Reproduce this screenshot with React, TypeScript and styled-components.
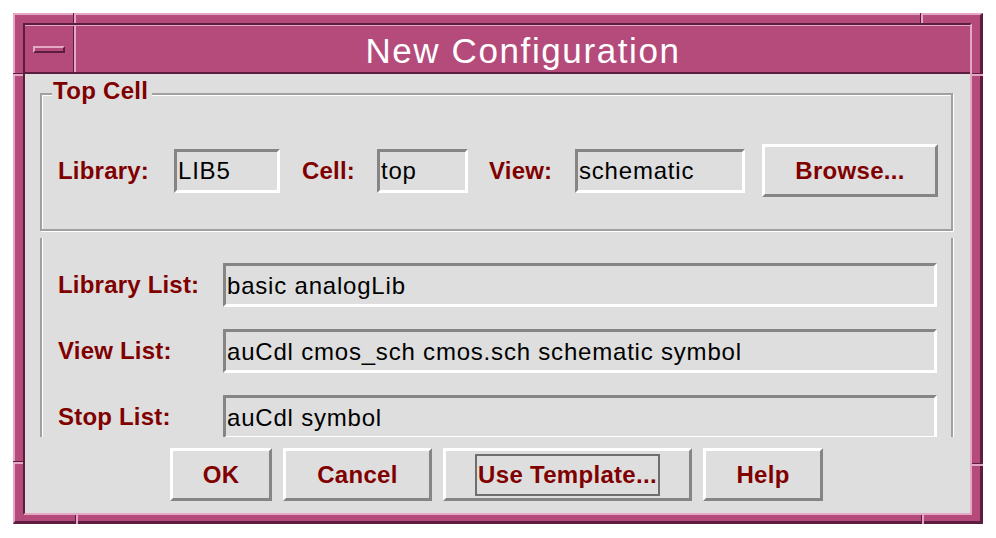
import React from "react";
import styled, { createGlobalStyle } from "styled-components";

const C = {
  pink: "#b44b7b",
  pinkLight: "#e4a8c5",
  pinkDark: "#5d1d40",
  body: "#dedede",
  grey: "#858585",
  etch: "#a0a0a0",
  red: "#800000",
};

const Global = createGlobalStyle`
  html, body { margin: 0; padding: 0; background: #ffffff; }
  body { font-family: "Liberation Sans", Arial, sans-serif; }
`;

const Page = styled.div`
  width: 996px;
  height: 538px;
  box-sizing: border-box;
  padding: 13px;
`;

const Window = styled.div`
  position: relative;
  width: 970px;
  height: 511px;
  box-sizing: border-box;
  background: ${C.pink};
  border-style: solid;
  border-width: 2px 3px 3px 2px;
  border-color: ${C.pinkLight} ${C.pinkDark} ${C.pinkDark} ${C.pinkLight};
  padding: 8px 8px 6px 8px;
  display: flex;
`;

const Notch = styled.span<{ $x: number; $y: number; $len: number; $vertical?: boolean }>`
  position: absolute;
  left: ${(p) => p.$x}px;
  top: ${(p) => p.$y}px;
  box-sizing: border-box;
  background: ${C.pinkLight};
  ${(p) =>
    p.$vertical
      ? `width: 3px; height: ${p.$len}px; border-left: 1px solid ${C.pinkDark};`
      : `height: 3px; width: ${p.$len}px; border-top: 1px solid ${C.pinkDark};`}
`;

const Client = styled.div`
  flex: 1;
  display: flex;
  flex-direction: column;
  border-style: solid;
  border-width: 2px;
  border-color: ${C.pinkDark} ${C.pinkLight} ${C.pinkLight} ${C.pinkDark};
`;

const TitleBar = styled.div`
  height: 49px;
  box-sizing: border-box;
  display: flex;
  background: ${C.pink};
  border-top: 1px solid ${C.pinkLight};
  border-bottom: 2px solid ${C.pinkDark};
`;

const MenuButton = styled.div`
  width: 49px;
  box-sizing: border-box;
  border-right: 1px solid ${C.pinkDark};
  display: flex;
  align-items: center;
  justify-content: center;
`;

const MenuGlyph = styled.span`
  display: block;
  width: 32px;
  height: 7px;
  box-sizing: border-box;
  background: ${C.pink};
  border-style: solid;
  border-width: 2px;
  border-color: ${C.pinkLight} ${C.pinkDark} ${C.pinkDark} ${C.pinkLight};
  margin-top: 1px;
`;

const Title = styled.div`
  flex: 1;
  border-left: 2px solid ${C.pinkLight};
  display: flex;
  align-items: center;
  justify-content: center;
  padding-top: 4px;
  color: #ffffff;
  font-size: 35px;
  letter-spacing: 1.6px;
`;

const Body = styled.div`
  flex: 1;
  background: ${C.body};
  padding: 19px 17px 12px 15px;
  display: flex;
  flex-direction: column;
`;

const Group = styled.div`
  position: relative;
  height: 138px;
  box-sizing: border-box;
  border: 2px solid ${C.etch};
  box-shadow: inset 1px 1px 0 #ffffff, 1px 1px 0 #ffffff;
  padding: 49px 0 0 16px;
`;

const Legend = styled.span`
  position: absolute;
  top: -16px;
  left: 10px;
  padding: 0 4px 0 1px;
  background: ${C.body};
  color: ${C.red};
  font-weight: bold;
  font-size: 24px;
  line-height: 24px;
  letter-spacing: 0.3px;
`;

const TopRow = styled.div`
  display: flex;
  align-items: center;
  height: 53px;
`;

const Label = styled.span<{ $w: number; $ml?: number }>`
  flex: none;
  width: ${(p) => p.$w}px;
  margin-left: ${(p) => p.$ml ?? 0}px;
  color: ${C.red};
  font-weight: bold;
  font-size: 24px;
  letter-spacing: 0.2px;
  white-space: nowrap;
`;

const Field = styled.div<{ $w?: number }>`
  ${(p) => (p.$w ? `width: ${p.$w}px; flex: none;` : `flex: 1;`)}
  height: 44px;
  box-sizing: border-box;
  border-style: solid;
  border-width: 3px;
  border-color: ${C.grey} #ffffff #ffffff ${C.grey};
  background: ${C.body};
  display: flex;
  align-items: center;
  padding: 1px 0 0 1px;
  overflow: hidden;
  white-space: nowrap;
  color: #000000;
  font-size: 24px;
  letter-spacing: 0.8px;
`;

const Button = styled.div<{ $w: number; $ml?: number }>`
  flex: none;
  width: ${(p) => p.$w}px;
  margin-left: ${(p) => p.$ml ?? 0}px;
  height: 53px;
  box-sizing: border-box;
  border-style: solid;
  border-width: 3px;
  border-color: #ffffff ${C.grey} ${C.grey} #ffffff;
  background: ${C.body};
  display: flex;
  align-items: center;
  justify-content: center;
  color: ${C.red};
  font-weight: bold;
  font-size: 24px;
  letter-spacing: 0.3px;
  white-space: nowrap;
`;

const Focus = styled.span`
  display: inline-block;
  border: 2px solid #6e6e6e;
  padding: 0 1px;
  line-height: 38px;
`;

const ListPanel = styled.div`
  margin-top: 7px;
  height: 199px;
  box-sizing: border-box;
  border-left: 2px solid ${C.etch};
  border-right: 2px solid ${C.etch};
  box-shadow: inset 1px 0 0 #ffffff, 1px 0 0 #ffffff;
  overflow: hidden;
  padding: 25px 14px 0 16px;
  display: flex;
  flex-direction: column;
  gap: 22px;
`;

const ListRow = styled.div`
  flex: none;
  display: flex;
  align-items: center;
  height: 44px;
`;

const ButtonRow = styled.div`
  margin-top: 11px;
  display: flex;
  justify-content: center;
  gap: 11px;
`;

const lists = [
  { label: "Library List:", value: "basic analogLib" },
  { label: "View List:", value: "auCdl cmos_sch cmos.sch schematic symbol" },
  { label: "Stop List:", value: "auCdl symbol" },
];

export default function App() {
  return (
    <Page>
      <Global />
      <Window>
        <Notch $vertical $x={58} $y={-2} $len={10} />
        <Notch $vertical $x={905} $y={-2} $len={10} />
        <Notch $x={-2} $y={58} $len={10} />
        <Notch $x={957} $y={58} $len={11} />
        <Notch $vertical $x={60} $y={500} $len={9} />
        <Notch $vertical $x={906} $y={500} $len={9} />
        <Notch $x={-2} $y={446} $len={10} />
        <Notch $x={957} $y={448} $len={11} />
        <Client>
          <TitleBar>
            <MenuButton>
              <MenuGlyph />
            </MenuButton>
            <Title>New Configuration</Title>
          </TitleBar>
          <Body>
            <Group>
              <Legend>Top Cell</Legend>
              <TopRow>
                <Label $w={116}>Library:</Label>
                <Field $w={106}>LIB5</Field>
                <Label $w={75} $ml={22}>Cell:</Label>
                <Field $w={91}>top</Field>
                <Label $w={86} $ml={21}>View:</Label>
                <Field $w={170}>schematic</Field>
                <Button $w={176} $ml={17}>Browse...</Button>
              </TopRow>
            </Group>
            <ListPanel>
              {lists.map((l) => (
                <ListRow key={l.label}>
                  <Label $w={165}>{l.label}</Label>
                  <Field>{l.value}</Field>
                </ListRow>
              ))}
            </ListPanel>
            <ButtonRow>
              <Button $w={102}>OK</Button>
              <Button $w={149}>Cancel</Button>
              <Button $w={249}>
                <Focus>Use Template...</Focus>
              </Button>
              <Button $w={120}>Help</Button>
            </ButtonRow>
          </Body>
        </Client>
      </Window>
    </Page>
  );
}
